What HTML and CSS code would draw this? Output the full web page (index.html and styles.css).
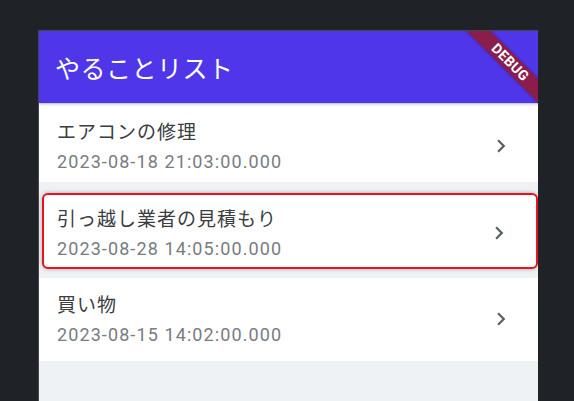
FILE: index.html
```html
<!DOCTYPE html>
<html lang="ja">
<head>
<meta charset="utf-8">
<link rel="stylesheet" href="styles.css">
</head>
<body>
<div class="frame">
  <header class="appbar">
    <h1 class="appbar-title">やることリスト</h1>
    <div class="banner"><div class="banner-band">DEBUG</div></div>
  </header>
  <ul class="list">
    <li class="item item-first">
      <div class="texts">
        <div class="title">エアコンの修理</div>
        <div class="date">2023-08-18 21:03:00.000</div>
      </div>
      <svg class="chev" viewBox="0 0 24 24" width="26" height="26"><path d="M10 6L8.59 7.41 13.17 12l-4.58 4.59L10 18l6-6z"/></svg>
    </li>
    <li class="item item-selected">
      <div class="texts">
        <div class="title">引っ越し業者の見積もり</div>
        <div class="date">2023-08-28 14:05:00.000</div>
      </div>
      <svg class="chev" viewBox="0 0 24 24" width="26" height="26"><path d="M10 6L8.59 7.41 13.17 12l-4.58 4.59L10 18l6-6z"/></svg>
    </li>
    <li class="item item-last">
      <div class="texts">
        <div class="title">買い物</div>
        <div class="date">2023-08-15 14:02:00.000</div>
      </div>
      <svg class="chev" viewBox="0 0 24 24" width="26" height="26"><path d="M10 6L8.59 7.41 13.17 12l-4.58 4.59L10 18l6-6z"/></svg>
    </li>
  </ul>
</div>
</body>
</html>
```
FILE: styles.css
```css
* { box-sizing: border-box; }
html, body {
  margin: 0;
  height: 401px;
  overflow: hidden;
  background: #1f2327;
}
body {
  padding: 30px 0 0 38px;
  font-family: "Roboto", "Noto Sans CJK JP", sans-serif;
}
.frame {
  width: 500px;
  height: 380px;
  background: #eff2f5;
  border-top: 1px solid #44484e;
  border-left: 1px solid #44484e;
  overflow: hidden;
  position: relative;
}
.appbar {
  height: 72px;
  background: #4f36e9;
  display: flex;
  align-items: center;
  padding-left: 16px;
  position: relative;
  box-shadow: 0 1px 3px rgba(0,0,0,0.25);
  z-index: 2;
}
.appbar-title {
  margin: 0;
  font-family: "Noto Sans CJK JP", sans-serif;
  font-weight: 400;
  font-size: 25px;
  color: #ffffff;
  letter-spacing: 0.5px;
}
.banner {
  position: absolute;
  top: 0;
  right: 0;
  width: 90px;
  height: 90px;
  overflow: hidden;
}
.banner-band {
  position: absolute;
  left: -3px;
  top: 23px;
  width: 130px;
  height: 17px;
  background: #8a1d4b;
  color: #fff;
  font-family: "Roboto", sans-serif;
  font-weight: 700;
  font-size: 14px;
  line-height: 17px;
  letter-spacing: 0.3px;
  text-align: center;
  transform: rotate(45deg);
  box-shadow: 0 0 3px rgba(0,0,0,0.3);
}
.list {
  list-style: none;
  margin: 0;
  padding: 0;
}
.item {
  display: flex;
  align-items: center;
  background: #ffffff;
  padding: 0 24px 0 18px;
}
.item-first {
  height: 78px;
  margin-top: 1px;
  padding-top: 5px;
}
.item-selected {
  height: 76px;
  margin: 11px 0 0 3px;
  border: 2px solid #e8141c;
  border-radius: 6px;
  padding-left: 13px;
  padding-top: 3px;
  box-shadow: 0 0 4px rgba(0,0,0,0.3);
  position: relative;
}
.item-last {
  height: 83px;
  margin-top: 9px;
  padding-bottom: 2px;
}
.texts {
  flex: 1;
  display: flex;
  flex-direction: column;
  gap: 6px;
}
.title {
  font-family: "Noto Sans CJK JP", sans-serif;
  font-size: 19px;
  line-height: 26px;
  color: #3b3d40;
  letter-spacing: 1px;
}
.date {
  font-size: 18px;
  line-height: 24px;
  color: #777c81;
  letter-spacing: 1.1px;
}
.chev {
  fill: #585e64;
  display: block;
}
```
